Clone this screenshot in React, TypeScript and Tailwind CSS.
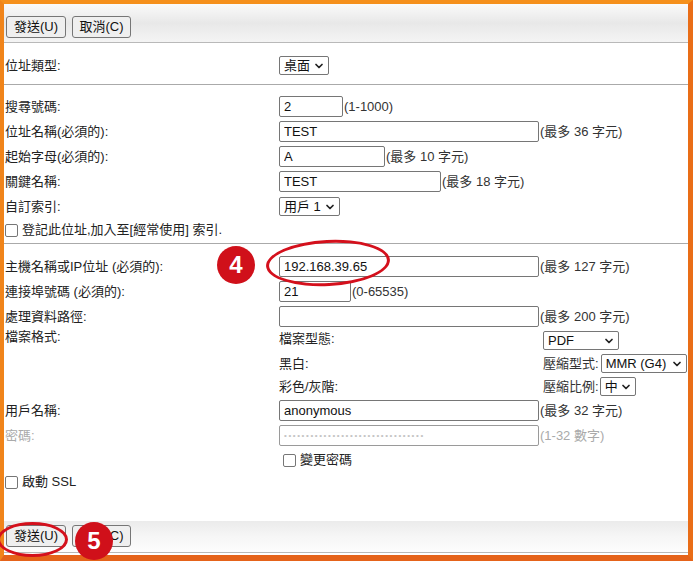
import React from "react";
import { ChevronDown } from "lucide-react";

function Btn({ children, w }: { children: React.ReactNode; w: string }) {
  return (
    <div
      className={`${w} h-[22px] flex items-center justify-center rounded-[3px] border border-[#767676] bg-[#efefef] text-[13px] text-[#111]`}
    >
      {children}
    </div>
  );
}

function Sel({ label, w, h = "h-[19px]" }: { label: string; w: string; h?: string }) {
  return (
    <div
      className={`${w} ${h} flex items-center justify-between rounded-[2px] border border-[#767676] bg-white pl-[4px] pr-[3px] text-[13px] text-[#111]`}
    >
      <span className="leading-none">{label}</span>
      <ChevronDown size={12} strokeWidth={3.5} className="text-[#222]" />
    </div>
  );
}

function Inp({ value, w, disabled }: { value: string; w: string; disabled?: boolean }) {
  return (
    <input
      readOnly
      value={value}
      className={`${w} h-[21px] rounded-[2px] border ${
        disabled ? "border-[#9a9a9a] text-[#aaa]" : "border-[#767676] text-[#111]"
      } bg-white px-[4px] text-[13px] outline-none`}
    />
  );
}

function Check({ label, gray }: { label: string; gray?: boolean }) {
  return (
    <div className="flex items-center gap-[4px]">
      <span className="inline-block h-[13px] w-[13px] rounded-[2px] border border-[#767676] bg-white" />
      <span className={gray ? "text-[#999]" : "text-[#222]"}>{label}</span>
    </div>
  );
}

function Row({
  label,
  children,
  labelClass = "text-[#222]",
  h = "h-[25px]",
}: {
  label?: React.ReactNode;
  children?: React.ReactNode;
  labelClass?: string;
  h?: string;
}) {
  return (
    <div className={`flex ${h} items-center`}>
      <div className={`w-[274px] shrink-0 ${labelClass}`}>{label}</div>
      <div className="flex items-center">{children}</div>
    </div>
  );
}

const Hint = ({ children, gray }: { children: React.ReactNode; gray?: boolean }) => (
  <span className={`ml-[1px] ${gray ? "text-[#aaa]" : "text-[#333]"}`}>{children}</span>
);

export default function App() {
  return (
    <div className="relative h-[561px] w-[693px] overflow-hidden bg-white font-['Liberation_Sans','Noto_Sans_CJK_TC',sans-serif] text-[13px]">
      <div className="flex h-full w-full flex-col border-t-[4px] border-r-[5px] border-b-[6px] border-l-[4px] border-t-[#f5901c] border-r-[#e96d17] border-b-[#e5631a] border-l-[#f0841a] bg-white">
        {/* top toolbar */}
        <div className="flex h-[39px] shrink-0 gap-[6px] border-b border-[#b9b9b9] bg-gradient-to-b from-[#fafafa] via-[#e8e8e8] to-[#f4f4f4] pl-[2px] pt-[12px]">
          <Btn w="w-[60px]">發送(U)</Btn>
          <Btn w="w-[59px]">取消(C)</Btn>
        </div>

        {/* section 1 */}
        <div className="border-b border-[#aaaaaa] pt-[10px] pb-[6px] pl-[1px]">
          <Row label="位址類型:">
            <Sel label="桌面" w="w-[50px]" />
          </Row>
        </div>

        {/* section 2 */}
        <div className="border-b border-[#aaaaaa] pt-[9px] pb-[2px] pl-[1px]">
          <Row label="搜尋號碼:">
            <Inp value="2" w="w-[64px]" />
            <Hint>(1-1000)</Hint>
          </Row>
          <Row label="位址名稱(必須的):">
            <Inp value="TEST" w="w-[260px]" />
            <Hint>(最多 36 字元)</Hint>
          </Row>
          <Row label="起始字母(必須的):">
            <Inp value="A" w="w-[106px]" />
            <Hint>(最多 10 字元)</Hint>
          </Row>
          <Row label="關鍵名稱:">
            <Inp value="TEST" w="w-[162px]" />
            <Hint>(最多 18 字元)</Hint>
          </Row>
          <Row label="自訂索引:">
            <Sel label="用戶 1" w="w-[61px]" />
          </Row>
          <div className="flex h-[22px] items-center">
            <Check label="登記此位址,加入至[經常使用] 索引." />
          </div>
        </div>

        {/* section 3 */}
        <div className="pt-[10px] pl-[1px]">
          <Row label="主機名稱或IP位址 (必須的):">
            <Inp value="192.168.39.65" w="w-[260px]" />
            <Hint>(最多 127 字元)</Hint>
          </Row>
          <Row label="連接埠號碼 (必須的):">
            <Inp value="21" w="w-[72px]" />
            <Hint>(0-65535)</Hint>
          </Row>
          <Row label="處理資料路徑:">
            <Inp value="" w="w-[260px]" />
            <Hint>(最多 200 字元)</Hint>
          </Row>

          <div className="flex">
            <div className="w-[274px] shrink-0 -mt-[2px] text-[#222]">檔案格式:</div>
            <div className="flex flex-col">
              <div className="flex h-[23px] items-center">
                <div className="w-[264px] shrink-0 -mt-[4px] text-[#222]">檔案型態:</div>
                <Sel label="PDF" w="w-[76px]" />
              </div>
              <div className="flex h-[23px] items-center">
                <div className="w-[264px] shrink-0 text-[#222]">黑白:</div>
                <span className="text-[#333]">壓縮型式:</span>
                <div className="ml-[2px]">
                  <Sel label="MMR (G4)" w="w-[86px]" />
                </div>
              </div>
              <div className="flex h-[23px] items-center">
                <div className="w-[264px] shrink-0 text-[#222]">彩色/灰階:</div>
                <span className="text-[#333]">壓縮比例:</span>
                <div className="ml-[1px]">
                  <Sel label="中" w="w-[36px]" />
                </div>
              </div>
            </div>
          </div>

          <Row label="用戶名稱:">
            <Inp value="anonymous" w="w-[260px]" />
            <Hint>(最多 32 字元)</Hint>
          </Row>
          <Row label="密碼:" labelClass="text-[#aaa]">
            <div className="flex h-[21px] w-[260px] items-center overflow-hidden rounded-[2px] border border-[#9a9a9a] bg-white px-[4px]">
              <span className="text-[8px] tracking-[1.6px] text-[#c4c4c4]">
                {"••••••••••••••••••••••••••••••••"}
              </span>
            </div>
            <Hint gray>(1-32 數字)</Hint>
          </Row>
          <Row h="h-[24px]">
            <div className="ml-[4px]">
              <Check label="變更密碼" />
            </div>
          </Row>
          <div className="flex h-[20px] items-center">
            <Check label="啟動 SSL" />
          </div>
        </div>

        {/* bottom toolbar */}
        <div className="mt-auto mb-[2px] flex h-[32px] shrink-0 gap-[6px] border-b border-[#b9b9b9] bg-gradient-to-b from-[#ebebeb] via-[#f6f6f6] to-[#fdfdfd] pl-[2px] pt-[4px]">
          <Btn w="w-[60px]">發送(U)</Btn>
          <Btn w="w-[59px]">取消(C)</Btn>
        </div>
      </div>

      {/* annotations */}
      <div className="absolute left-[266px] top-[240px] h-[46px] w-[124px] rounded-[50%] border-[3px] border-[#d4101c] -rotate-[3deg]" />
      <div className="absolute left-[217px] top-[246px] flex h-[38px] w-[38px] items-center justify-center rounded-full bg-[#d0101a] text-[24px] font-bold text-white">
        4
      </div>
      <div className="absolute left-[-3px] top-[522px] h-[35px] w-[71px] rounded-[50%] border-[3px] border-[#d4101c]" />
      <div className="absolute left-[75px] top-[522px] flex h-[38px] w-[38px] items-center justify-center rounded-full bg-[#d0101a] text-[24px] font-bold text-white">
        5
      </div>
    </div>
  );
}
